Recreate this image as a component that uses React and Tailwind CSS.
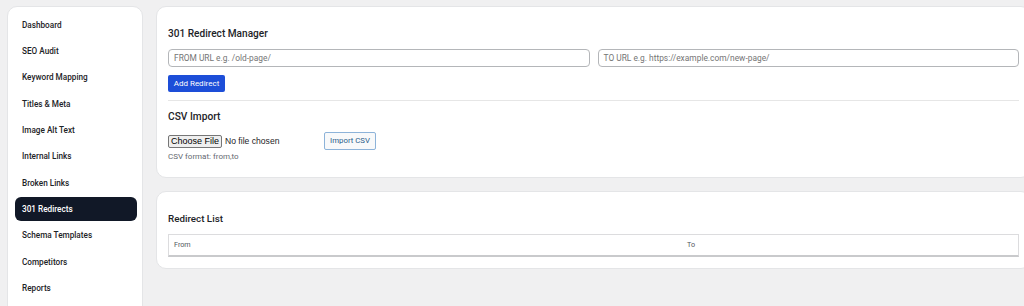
import React from "react";

const items = [
  "Dashboard",
  "SEO Audit",
  "Keyword Mapping",
  "Titles & Meta",
  "Image Alt Text",
  "Internal Links",
  "Broken Links",
  "301 Redirects",
  "Schema Templates",
  "Competitors",
  "Reports",
];

export default function App() {
  return (
    <div
      className="w-[1024px] h-[306px] overflow-hidden bg-[#f0f0f1] text-[#1d2327]"
      style={{ fontFamily: 'Roboto, "Noto Sans", sans-serif' }}
    >
      <div className="flex items-start pt-[6px] pl-[7px] gap-[13px]">
        <aside className="w-[136px] shrink-0 h-[320px] bg-white rounded-[10px] border border-[#e4e5e7] pt-[6px] pl-[7px] pr-[5px] flex flex-col gap-[2.3px]">
          {items.map((it) => (
            <div
              key={it}
              className={
                "h-[24px] flex items-center px-[7px] rounded-[6px] text-[8.2px] font-medium " +
                (it === "301 Redirects" ? "bg-[#111827] text-white" : "text-[#1d2327]")
              }
            >
              {it}
            </div>
          ))}
        </aside>
        <main className="w-[875px] shrink-0 flex flex-col gap-[13px]">
          <section className="bg-white rounded-[10px] border border-[#e4e5e7] pt-[20px] pb-[15px] px-[11px]">
            <h2 className="text-[10.1px] leading-[14px] font-medium">301 Redirect Manager</h2>
            <div className="flex gap-[8px] mt-[8px]">
              <div className="flex-1 h-[18px] border border-[#b4b6b9] rounded-[4px] flex items-center px-[5px] text-[8.4px] text-[#757575]">
                FROM URL e.g. /old-page/
              </div>
              <div className="flex-1 h-[18px] border border-[#b4b6b9] rounded-[4px] flex items-center px-[5px] text-[8.4px] text-[#757575]">
                TO URL e.g. https://example.com/new-page/
              </div>
            </div>
            <button className="mt-[8px] h-[17px] w-[57px] bg-[#1d4ed8] text-white text-[8px] rounded-[2px] flex items-center justify-center">
              Add Redirect
            </button>
            <div className="mt-[8px] h-px bg-[#e6e6e6]" />
            <h2 className="mt-[9px] text-[10.2px] leading-[14px] font-medium">CSV Import</h2>
            <div className="mt-[8px] flex items-center h-[18px]">
              <div className="w-[156px] flex items-center" style={{ fontFamily: '"Liberation Sans", Arial, sans-serif' }}>
                <span className="h-[13px] w-[54px] bg-[#efefef] border border-[#767676] rounded-[2px] text-[9px] leading-[11px] flex items-center justify-center text-black">
                  Choose File
                </span>
                <span className="ml-[3px] text-[8.6px] text-[#1d2327]">No file chosen</span>
              </div>
              <button className="h-[18px] w-[52px] border border-[#8db3d9] rounded-[2px] bg-[#f8f9fa] text-[#2c5d8a] text-[7.8px] flex items-center justify-center">
                Import CSV
              </button>
            </div>
            <p className="mt-[2px] text-[8px] leading-[10px] text-[#646970]">CSV format: from,to</p>
          </section>
          <section className="bg-white rounded-[10px] border border-[#e4e5e7] pt-[20px] pb-[11px] px-[11px]">
            <h2 className="text-[9.8px] leading-[14px] font-medium">Redirect List</h2>
            <div className="mt-[8px] h-[23px] border border-[#dcdcde] border-b-2 border-b-[#c9cacc] flex items-center text-[7.2px] text-[#50575e]">
              <div className="w-[512px] pl-[5px]">From</div>
              <div className="pl-[6px]">To</div>
            </div>
          </section>
        </main>
      </div>
    </div>
  );
}
